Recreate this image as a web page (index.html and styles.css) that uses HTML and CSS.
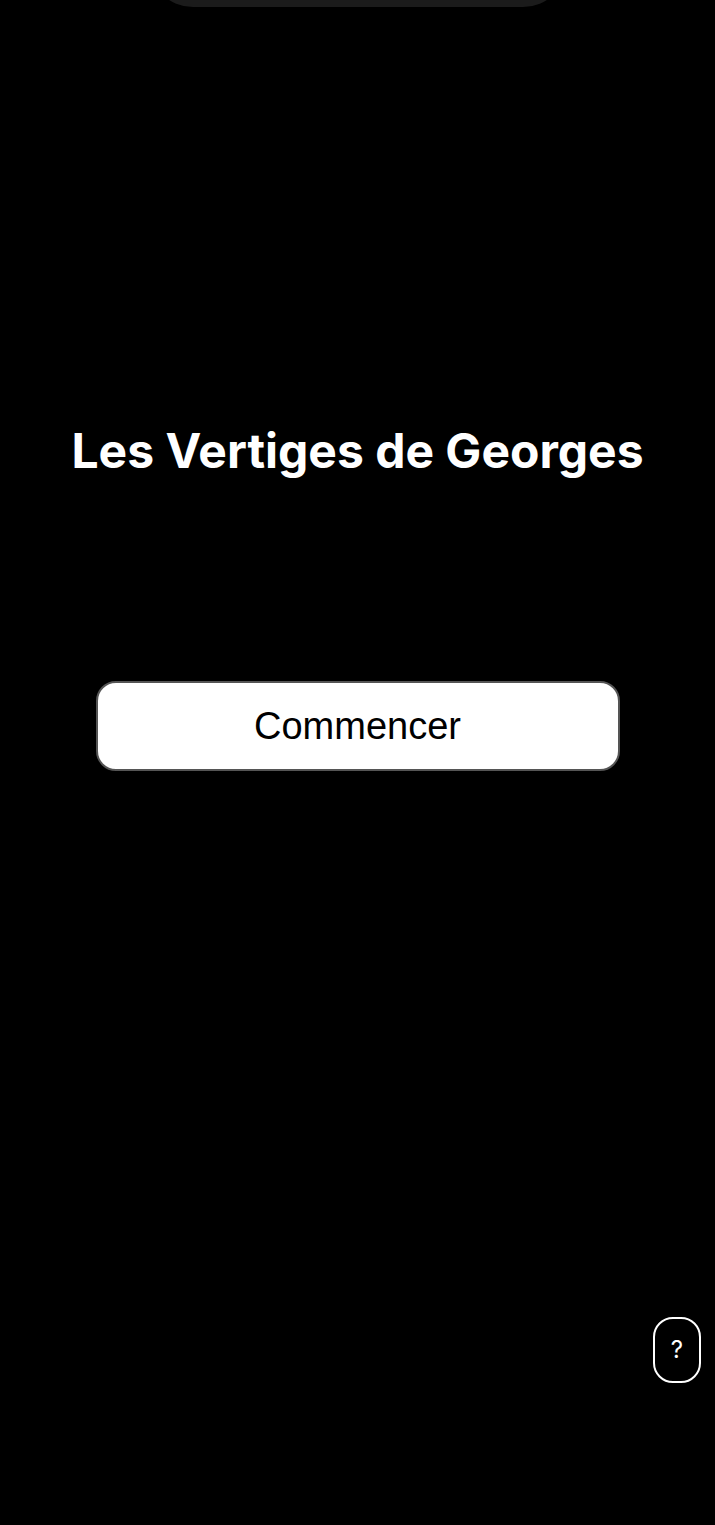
FILE: index.html
```html
<!DOCTYPE html>
<html lang="fr">
<head>
<meta charset="utf-8">
<meta name="viewport" content="width=device-width, initial-scale=1">
<title>Les Vertiges de Georges</title>
<link rel="stylesheet" href="styles.css">
</head>
<body>
<div class="notch"></div>
<main class="home">
<h1 class="title">Les Vertiges de Georges</h1>
<button class="start" type="button">Commencer</button>
</main>
<button class="help" type="button">?</button>
</body>
</html>
```
FILE: styles.css
```css
* {
  box-sizing: border-box;
}

body {
  margin: 0;
  min-height: 100vh;
  background: #000;
  color: #fff;
  font-family: Inter, sans-serif;
}

.notch {
  position: absolute;
  top: -93px;
  left: 0;
  right: 0;
  width: 418px;
  height: 100px;
  margin: 0 auto;
  background: #1b1b1b;
  border-radius: 44px;
}

.home {
  display: flex;
  flex-direction: column;
  align-items: center;
  gap: 200px;
  padding: 421px 24px 0;
}

.title {
  margin: 0;
  font-size: 48px;
  line-height: 60px;
  font-weight: 700;
  text-align: center;
}

.start {
  width: 100%;
  max-width: 524px;
  padding: 20px;
  border: 2px solid #555;
  border-radius: 20px;
  background: #fff;
  color: #000;
  font-family: "Liberation Sans", Arial, sans-serif;
  font-size: 38px;
  line-height: 46px;
}

.help {
  position: fixed;
  right: 14px;
  bottom: 142px;
  padding: 16px;
  border: 2px solid #fff;
  border-radius: 20px;
  background: #000;
  color: #fff;
  font-family: Inter, sans-serif;
  font-size: 24px;
  line-height: 30px;
}
```
